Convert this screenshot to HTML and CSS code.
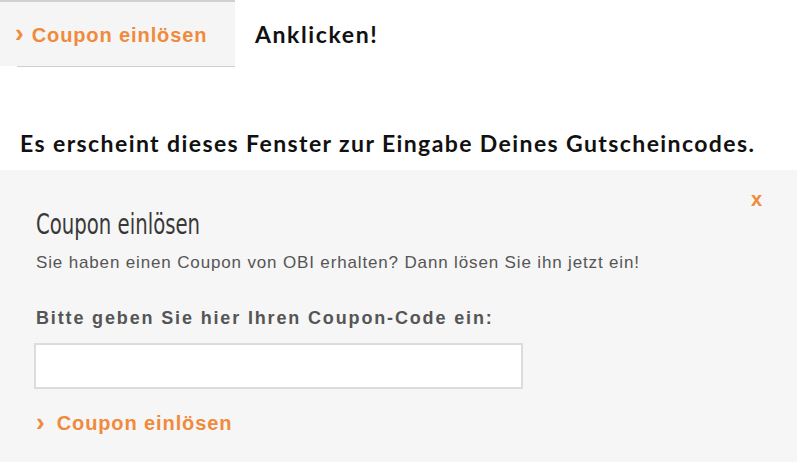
FILE: index.html
```html
<!DOCTYPE html>
<html lang="de">
<head>
<meta charset="utf-8">
<title>Coupon einlösen</title>
<link rel="stylesheet" href="styles.css">
</head>
<body>
<div class="top">
  <div class="tab">
    <a class="link tab-link"><span class="chev">›</span>Coupon einlösen</a>
  </div>
  <div class="note">Anklicken!</div>
</div>
<p class="intro">Es erscheint dieses Fenster zur Eingabe Deines Gutscheincodes.</p>
<div class="modal">
  <div class="close">x</div>
  <h2 class="title"><span class="title-text">Coupon einlösen</span></h2>
  <p class="desc">Sie haben einen Coupon von OBI erhalten? Dann lösen Sie ihn jetzt ein!</p>
  <label class="label">Bitte geben Sie hier Ihren Coupon-Code ein:</label>
  <div class="input"></div>
  <a class="link modal-link"><span class="chev">›</span>Coupon einlösen</a>
</div>
</body>
</html>
```
FILE: styles.css
```css
html, body {
  margin: 0;
  padding: 0;
  background: #ffffff;
}
body {
  width: 800px;
  height: 468px;
  overflow: hidden;
  font-family: "Liberation Sans", Arial, sans-serif;
}
.top {
  display: flex;
  align-items: flex-start;
}
.tab {
  width: 235px;
  height: 66px;
  background: #f5f5f5;
  border-top: 2px solid #d0d0d0;
  box-sizing: border-box;
  position: relative;
  display: flex;
  align-items: center;
}
.tab::after {
  content: "";
  position: absolute;
  left: 17px;
  right: 0;
  bottom: -1px;
  height: 1px;
  background: #d0d0d0;
}
.link {
  color: #f08a3c;
  font-weight: bold;
  font-size: 20px;
  letter-spacing: 0.9px;
  display: flex;
  align-items: center;
}
.chev {
  font-size: 26px;
  line-height: 20px;
  position: relative;
  top: -2px;
  letter-spacing: 0;
}
.tab-link {
  margin-left: 15px;
  margin-top: 2px;
}
.tab-link .chev {
  margin-right: 8px;
}
.modal-link .chev {
  margin-right: 12px;
}
.note {
  font-family: Lato, "Open Sans", sans-serif;
  font-weight: bold;
  font-size: 23px;
  letter-spacing: 1.6px;
  color: #111111;
  margin-left: 20px;
  margin-top: 20px;
}
.intro {
  font-family: Lato, "Open Sans", sans-serif;
  font-weight: bold;
  font-size: 23px;
  letter-spacing: 1.4px;
  color: #111111;
  margin: 0;
  padding: 129px 0 0 20px;
  position: absolute;
  top: 0;
  white-space: nowrap;
}
.modal {
  position: absolute;
  top: 170px;
  left: 0;
  width: 797px;
  height: 292px;
  background: #f6f6f6;
  box-sizing: border-box;
  padding: 38px 0 0 36px;
}
.close {
  position: absolute;
  right: 35px;
  top: 18px;
  color: #f08a3c;
  font-weight: bold;
  font-size: 20px;
}
.title {
  margin: 0;
  font-family: "DejaVu Sans Condensed", "DejaVu Sans", sans-serif;
  font-weight: normal;
  font-size: 29px;
  color: #383838;
  line-height: 32px;
  white-space: nowrap;
}
.title-text {
  display: inline-block;
  transform: scaleX(0.755);
  transform-origin: left center;
}
.desc {
  margin: 13px 0 0 0;
  font-size: 17px;
  letter-spacing: 0.85px;
  color: #555555;
  white-space: nowrap;
}
.label {
  display: block;
  margin-top: 35px;
  font-size: 18px;
  letter-spacing: 1.85px;
  font-weight: bold;
  color: #555555;
  white-space: nowrap;
}
.input {
  margin: 14px 0 0 -2px;
  width: 489px;
  height: 46px;
  box-sizing: border-box;
  background: #ffffff;
  border: 2px solid #dcdcdc;
}
.modal-link {
  margin-top: 23px;
}
```
